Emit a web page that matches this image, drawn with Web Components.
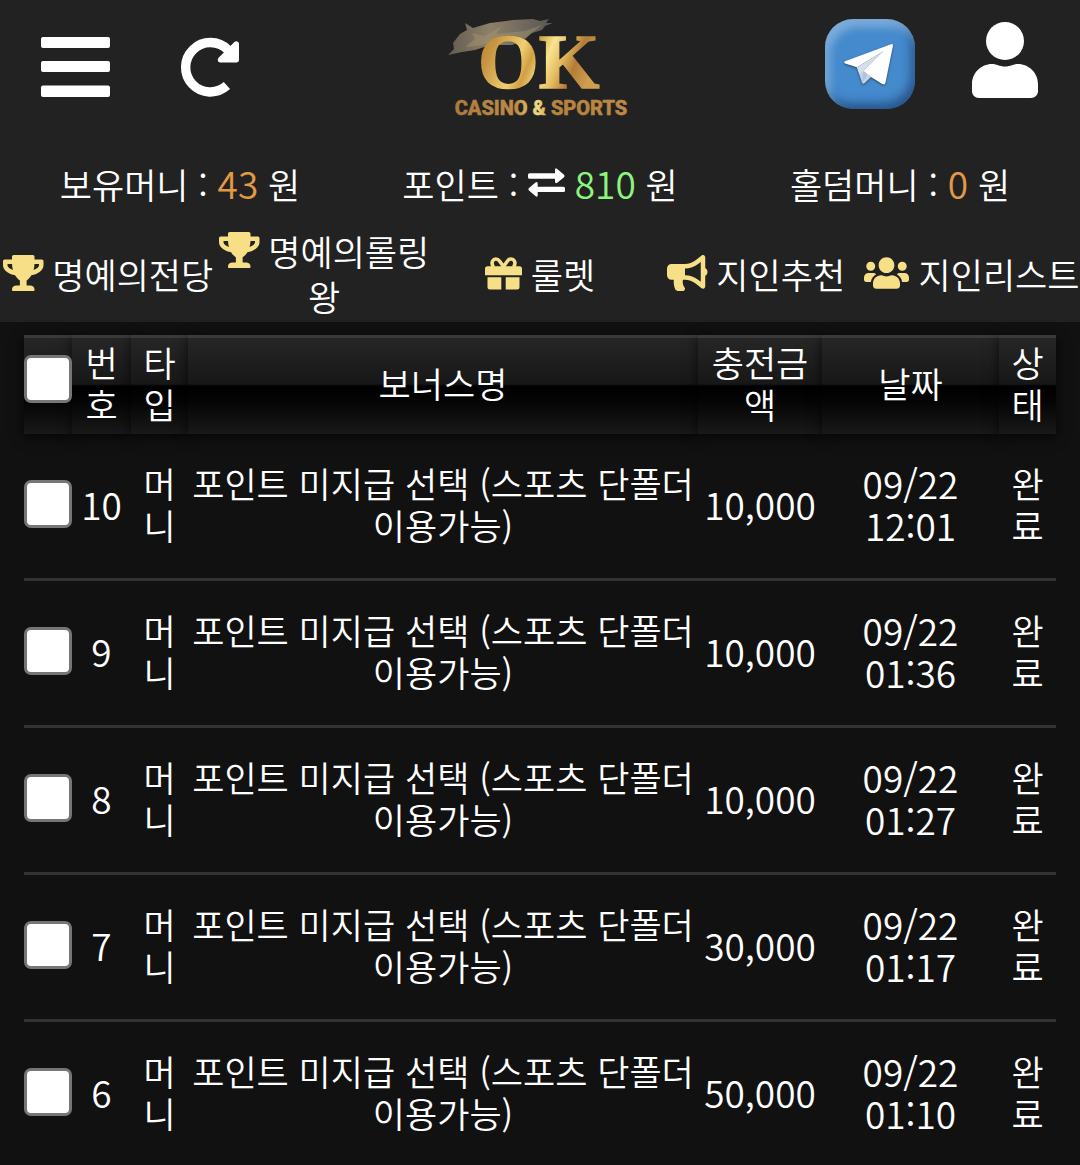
<!DOCTYPE html>
<html lang="ko">
<head>
<meta charset="UTF-8">
<meta name="viewport" content="width=device-width, initial-scale=1">
<title>OK Casino &amp; Sports</title>
<style>
    html {
        scrollbar-width: none;
    }

    body {
        margin: 0;
        background-color: #111;
        color: #fff;
        font-family: "Noto Sans CJK KR", sans-serif;
        font-size: 35px;
        font-weight: 350;
    }
</style>
</head>
<body>
<main-header></main-header>
<bonus-table></bonus-table>

<script>
const icons = {
    bars: ['0 0 69 60', '<rect width="69" height="11" rx="2"/><rect y="24" width="69" height="11" rx="2"/><rect y="48.5" width="69" height="11.5" rx="2"/>'],
    reload: ['0 0 59 59', '<path d="M46.8 11.8A24.7 24.7 0 1 0 45.9 47.6" fill="none" stroke="currentColor" stroke-width="9.4"/><path d="M55.3 6V21.7H39.5Z" stroke="currentColor" stroke-width="5.4" stroke-linejoin="round"/>'],
    user: ['0 0 66 76', '<circle cx="33" cy="19" r="19"/><path d="M20 42c5 0 7 2.500 13 2.500S41 42 46 42c11 0 20 9 20 20v7c0 4-3 7-7 7H7c-4 0-7-3-7-7v-7C0 51 9 42 20 42z"/>'],
    plane: ['0 0 49 41', '<path d="M12.500 22L20 26.500L27 33L20.500 39.300Q19 40.500 18 38.500Z" fill="#c3d2e4"/><path d="M1 17.200L47 .2Q49.300-.3 48.900 2.300L41.500 38.500Q40.800 41.300 38.500 40L19.500 26.800L39.500 7.200L13 23.200L1 19.500Q-.6 18.300 1 17.200Z"/><path d="M39.500 7.200L13 23.200L15.500 30.500Z" fill="#d5dfea"/><path d="M39.500 7.200L19.500 26.800L18 39Z" fill="#b3c3d7"/><path d="M39.500 7.200L19.500 26.800L27 33L38.500 40Z"/>'],
    trophy: ['0 0 576 512', '<path d="M552 64H448V24c0-13.300-10.700-24-24-24H152c-13.300 0-24 10.700-24 24v40H24C10.700 64 0 74.700 0 88v56c0 35.700 22.500 72.400 61.900 100.700 31.500 22.700 69.800 37.100 110 41.700C203.300 338.500 240 360 240 360v72h-48c-35.300 0-64 20.700-64 56v12c0 6.600 5.400 12 12 12h296c6.600 0 12-5.400 12-12v-12c0-35.300-28.700-56-64-56h-48v-72s36.700-21.500 68.100-73.600c40.300-4.600 78.600-19 110-41.700 39.300-28.300 61.900-65 61.900-100.700V88c0-13.300-10.700-24-24-24zM99.300 192.800C74.900 175.200 64 155.600 64 144v-16h64.200c1 32.600 5.800 61.200 12.800 86.200-15.100-5.200-29.200-12.400-41.700-21.400zM512 144c0 16.100-17.700 36.100-35.300 48.800-12.500 9-26.700 16.200-41.800 21.400 7-25 11.800-53.600 12.800-86.200H512v16z"/>'],
    gift: ['0 -2 37 36', '<path d="M18.500 9.500L14.500 4C12.500 1.300 9 1.500 7.700 3.800C6.700 5.700 7 8 8.500 10M18.500 9.500L22.500 4C24.500 1.300 28 1.500 29.300 3.800C30.300 5.700 30 8 28.500 10" fill="none" stroke="currentColor" stroke-width="3.600"/><path d="M2.500 9.300H34.500Q37 9.300 37 11.800V18.300H0V11.800Q0 9.300 2.500 9.300ZM2.500 20.300H16.300V32.500H5Q2.500 32.500 2.500 30ZM20.700 20.300H34.500V30Q34.500 32.500 32 32.500H20.700Z"/>'],
    bullhorn: ['0 0 576 512', '<path d="M576 240c0-23.630-12.950-44.040-32-55.120V32.010C544 23.260 537.020 0 512 0c-7.120 0-14.190 2.380-19.980 7.020l-85.030 68.030C364.280 109.190 310.660 128 256 128H64c-35.350 0-64 28.650-64 64v96c0 35.350 28.650 64 64 64h33.700c-1.390 10.480-2.180 21.140-2.180 32 0 39.770 9.260 77.350 25.560 110.940 5.190 10.690 16.520 17.060 28.400 17.060h74.280c26.050 0 41.690-29.840 25.900-50.560-16.400-21.520-26.150-48.360-26.150-77.440 0-11.110 1.620-21.790 4.410-32H256c54.660 0 108.280 18.810 150.980 52.950l85.030 68.030a32.023 32.023 0 0 0 19.980 7.020c24.920 0 32-22.780 32-32V295.130C563.050 284.040 576 263.630 576 240zm-96 141.420l-33.050-26.440C392.950 311.780 325.120 288 256 288v-96c69.120 0 136.950-23.780 190.950-66.980L480 98.580v282.840z"/>'],
    users: ['0 0 640 512', '<path d="M96 224c35.300 0 64-28.700 64-64s-28.700-64-64-64-64 28.700-64 64 28.700 64 64 64zm448 0c35.300 0 64-28.700 64-64s-28.700-64-64-64-64 28.700-64 64 28.700 64 64 64zm32 32h-64c-17.600 0-33.500 7.100-45.100 18.600 40.300 22.100 68.900 62 75.100 109.400h66c17.700 0 32-14.300 32-32v-32c0-35.300-28.700-64-64-64zm-256 0c61.900 0 112-50.100 112-112S381.900 32 320 32 208 82.100 208 144s50.100 112 112 112zm76.800 32h-8.300c-20.800 10-43.900 16-68.500 16s-47.600-6-68.500-16h-8.300C179.600 288 128 339.600 128 403.200V432c0 26.500 21.500 48 48 48h288c26.500 0 48-21.500 48-48v-28.800c0-63.600-51.600-115.200-115.200-115.200zm-223.700-13.400C161.500 263.100 145.600 256 128 256H64c-35.300 0-64 28.700-64 64v32c0 17.700 14.300 32 32 32h65.900c6.300-47.400 34.900-87.300 75.200-109.400z"/>'],
    exchange: ['0 0 37 29', '<path d="M1.500 5.300H27V2Q27 -1 29.300 1L36 6.700Q37.300 8 36 9.200L29.300 14.700Q27 16 27 13.500V10.700H1.500Q0 10.700 0 9.200V6.800Q0 5.300 1.500 5.300ZM35.500 18.700Q37 18.700 37 20.200V22.500Q37 24 35.500 24H9.700V27Q9.700 30 7.400 28L1 22.500Q-.4 21.200 1 20L7.400 14.500Q9.700 13 9.700 15.500V18.700Z"/>']
};

class AppIcon extends HTMLElement {
    connectedCallback() {
        const [viewBox, shapes] = icons[this.getAttribute('name')];
        this.attachShadow({ mode: 'open' }).innerHTML = `
        <style>
        :host {
            display: inline-block;
            line-height: 0;
        }

        svg {
            display: block;
            width: auto;
            height: 100%;
            overflow: visible;
        }
        </style>
        <svg viewBox="${viewBox}" fill="currentColor" aria-hidden="true">${shapes}</svg>
        `;
    }
}

class OkLogo extends HTMLElement {
    connectedCallback() {
        this.attachShadow({ mode: 'open' }).innerHTML = `
        <style>
        :host {
            display: block;
        }

        svg {
            display: block;
            width: 184px;
            height: 106px;
        }

        .name {
            font-family: "Liberation Serif", serif;
            font-size: 78px;
            font-weight: 700;
            stroke-width: 1.5px;
        }

        .tagline {
            font-family: Roboto, sans-serif;
            font-size: 20px;
            font-weight: 800;
        }
        </style>
        <svg viewBox="0 0 184 106">
            <defs>
                <linearGradient id="gold" x1="0" y1="0.1" x2="1" y2="0.4">
                    <stop offset="0" stop-color="#b07a30"/>
                    <stop offset="0.18" stop-color="#c89643"/>
                    <stop offset="0.4" stop-color="#f0d070"/>
                    <stop offset="0.5" stop-color="#d0a042"/>
                    <stop offset="0.62" stop-color="#f8e490"/>
                    <stop offset="0.74" stop-color="#e2b95c"/>
                    <stop offset="0.85" stop-color="#b27c38"/>
                    <stop offset="1" stop-color="#cf9e50"/>
                </linearGradient>
                <linearGradient id="tag" x1="0" x2="1">
                    <stop offset="0" stop-color="#ad7b3d"/>
                    <stop offset="0.36" stop-color="#bd8c45"/>
                    <stop offset="0.48" stop-color="#f3da83"/>
                    <stop offset="0.58" stop-color="#b5823f"/>
                    <stop offset="1" stop-color="#bd8944"/>
                </linearGradient>
                <linearGradient id="brush" x1="0" x2="1">
                    <stop offset="0" stop-color="#625b50"/>
                    <stop offset="0.4" stop-color="#8d8069"/>
                    <stop offset="1" stop-color="#575653"/>
                </linearGradient>
            </defs>
            <path d="M0 37L6 31L5 25L12 16L19 12L17 5L25 10L42 5L65 2L85 1L92 3L101 1L98 5L105 5L97 8L94 12L84 15L75 23L64 27L42 27L27 32L14 34Z" fill="url(#brush)"/>
            <path d="M17 29L27 21L24 15L37 18L54 8L48 16L77 13L94 7L77 20L48 23L30 28Z" fill="#b09b70" opacity=".4"/>
            <text class="name" x="30" y="70" fill="url(#gold)" stroke="url(#gold)">OK</text>
            <text class="tagline" x="93" y="97" text-anchor="middle" fill="url(#tag)" stroke="url(#tag)" stroke-width=".5">CASINO &amp; SPORTS</text>
        </svg>
        `;
    }
}

class MoneyItem extends HTMLElement {
    connectedCallback() {
        this.attachShadow({ mode: 'open' }).innerHTML = `
        <style>
        :host {
            display: block;
            text-align: center;
            white-space: nowrap;
        }

        .amount {
            color: var(--amount-color, #e39a45);
            font-size: 37px;
            line-height: 1;
        }
        </style>
        <slot></slot> : <slot name="action"></slot>
        <span class="amount">${this.getAttribute('amount')}</span> 원
        `;
    }
}

class NavItem extends HTMLElement {
    connectedCallback() {
        this.attachShadow({ mode: 'open' }).innerHTML = `
        <style>
        :host {
            display: block;
            text-align: center;
        }

        a {
            color: inherit;
            text-decoration: none;
        }

        app-icon {
            height: 36px;
            margin-right: 9px;
            color: #f7df87;
            vertical-align: -2px;
        }
        </style>
        <a href="#"><app-icon name="${this.getAttribute('icon')}"></app-icon><slot></slot></a>
        `;
    }
}

class MainHeader extends HTMLElement {
    constructor() {
        super();
        this.attachShadow({ mode: 'open' });
    }

    connectedCallback() {
        this.render();
    }

    render() {
        this.shadowRoot.innerHTML = `
        <style>
        :host {
            display: block;
            background-color: #222;
            line-height: 45px;
        }

        button {
            padding: 0;
            border: none;
            background: transparent;
            color: inherit;
            font: inherit;
            cursor: pointer;
        }

        .top-bar {
            display: grid;
            grid-template-columns: 1fr auto 1fr;
            align-items: start;
            padding: 18px 42px 37px 41px;
        }

        .group {
            display: flex;
            align-items: flex-end;
        }

        .group button {
            display: flex;
        }

        .group-left {
            gap: 71px;
            padding-top: 19px;
        }

        .group-right {
            justify-content: flex-end;
            align-items: flex-start;
            gap: 57px;
        }

        .bars {
            height: 60px;
        }

        .reload {
            height: 59px;
        }

        .user {
            height: 76px;
            margin-top: 4px;
        }

        .group .telegram {
            align-items: center;
            justify-content: center;
            width: 90px;
            height: 90px;
            margin-top: 1px;
            border-radius: 28px;
            background-color: #458acd;
            box-shadow: inset 5px 8px 9px rgba(255, 255, 255, .3), inset -4px -6px 10px rgba(10, 35, 75, .5);
        }

        .telegram app-icon {
            height: 41px;
            margin-right: 4px;
            filter: drop-shadow(0 1px 1px rgba(0, 0, 0, .5));
        }

        .money {
            display: grid;
            grid-template-columns: repeat(3, 1fr);
        }

        .money app-icon {
            height: 29px;
            vertical-align: 2px;
        }

        .point {
            --amount-color: #8df57b;
        }

        nav {
            display: grid;
            grid-template-columns: repeat(5, 1fr);
            align-items: center;
            padding: 22px 0 4px;
        }
        </style>

        <header>
            <div class="top-bar">
                <div class="group group-left">
                    <button aria-label="메뉴"><app-icon class="bars" name="bars"></app-icon></button>
                    <button aria-label="새로고침"><app-icon class="reload" name="reload"></app-icon></button>
                </div>
                <ok-logo></ok-logo>
                <div class="group group-right">
                    <button class="telegram" aria-label="텔레그램"><app-icon name="plane"></app-icon></button>
                    <button aria-label="내 정보"><app-icon class="user" name="user"></app-icon></button>
                </div>
            </div>
            <div class="money">
                <money-item amount="43">보유머니</money-item>
                <money-item class="point" amount="810">포인트<button slot="action" aria-label="포인트 전환"><app-icon name="exchange"></app-icon></button></money-item>
                <money-item amount="0">홀덤머니</money-item>
            </div>
            <nav>
                <nav-item icon="trophy">명예의전당</nav-item>
                <nav-item icon="trophy">명예의롤링왕</nav-item>
                <nav-item icon="gift">룰렛</nav-item>
                <nav-item icon="bullhorn">지인추천</nav-item>
                <nav-item icon="users">지인리스트</nav-item>
            </nav>
        </header>
        `;
    }
}

class BonusTable extends HTMLElement {
    constructor() {
        super();
        this.attachShadow({ mode: 'open' });
    }

    generateRows() {
        const bonuses = [
            { id: 10, amount: '10,000', date: '09/22 12:01' },
            { id: 9, amount: '10,000', date: '09/22 01:36' },
            { id: 8, amount: '10,000', date: '09/22 01:27' },
            { id: 7, amount: '30,000', date: '09/22 01:17' },
            { id: 6, amount: '50,000', date: '09/22 01:10' }
        ];

        let rowsHTML = '';

        for (let bonus of bonuses) {
            rowsHTML += `
            <tr>
                <td class="check"><input type="checkbox" aria-label="${bonus.id}번 선택"></td>
                <td class="number">${bonus.id}</td>
                <td class="narrow">머니</td>
                <td>포인트 미지급 선택 (스포츠 단폴더 이용가능)</td>
                <td class="number">${bonus.amount}</td>
                <td class="number">${bonus.date}</td>
                <td class="narrow">완료</td>
            </tr>`;
        }

        return rowsHTML;
    }

    toggleAll() {
        const checkAll = this.shadowRoot.querySelector('th input');
        const checks = this.shadowRoot.querySelectorAll('td input');

        checkAll.addEventListener('change', () => {
            checks.forEach(check => check.checked = checkAll.checked);
        });
    }

    connectedCallback() {
        this.render();
        this.toggleAll();
    }

    render() {
        this.shadowRoot.innerHTML = `
        <style>
        :host {
            display: block;
            padding: 13px 24px 0;
            line-height: 42px;
        }

        table {
            width: 100%;
            border-spacing: 0;
            table-layout: fixed;
            text-align: center;
        }

        .col-check { width: 48px; }
        .col-no { width: 59px; }
        .col-narrow { width: 57px; }
        .col-amount { width: 124px; }
        .col-date { width: 177px; }

        th {
            padding: 3px 0 9px;
            border-top: 3px solid #3a3a3a;
            background: linear-gradient(#262626, #171717 48%, #000 50%, #040404 65%, #191919);
            background-clip: padding-box;
            box-shadow: 0 3px 12px rgba(0, 0, 0, .7);
            font-weight: inherit;
        }

        th.check {
            padding-bottom: 18px;
        }

        th.narrow,
        td.narrow,
        th.amount {
            padding-right: 12px;
            padding-left: 12px;
        }

        td {
            padding: 28px 0 32px;
            border-bottom: 3px solid #333;
        }

        td.check {
            padding: 25px 0 30px;
        }

        td.number {
            font-size: 37px;
        }

        input {
            position: relative;
            z-index: 1;
            display: block;
            appearance: none;
            box-sizing: border-box;
            width: 48px;
            height: 48px;
            margin: 0;
            border: 3px solid #767676;
            border-radius: 7px;
            background-color: #fff;
        }

        input:checked {
            background-color: #0075ff;
        }
        </style>

        <table>
            <colgroup>
                <col class="col-check">
                <col class="col-no">
                <col class="col-narrow">
                <col>
                <col class="col-amount">
                <col class="col-date">
                <col class="col-narrow">
            </colgroup>
            <thead>
                <tr>
                    <th class="check"><input type="checkbox" aria-label="전체 선택"></th>
                    <th class="narrow">번호</th>
                    <th class="narrow">타입</th>
                    <th>보너스명</th>
                    <th class="amount">충전금액</th>
                    <th>날짜</th>
                    <th class="narrow">상태</th>
                </tr>
            </thead>
            <tbody>
                ${this.generateRows()}
            </tbody>
        </table>
        `;
    }
}

customElements.define('app-icon', AppIcon);
customElements.define('ok-logo', OkLogo);
customElements.define('money-item', MoneyItem);
customElements.define('nav-item', NavItem);
customElements.define('main-header', MainHeader);
customElements.define('bonus-table', BonusTable);
</script>
</body>
</html>
